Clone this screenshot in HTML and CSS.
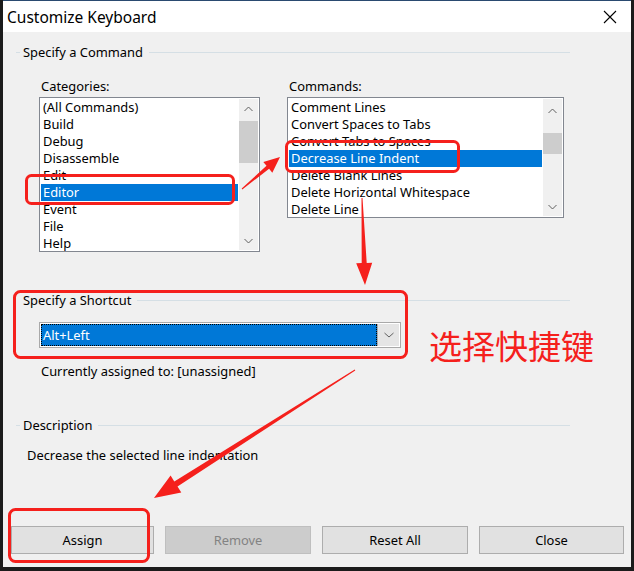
FILE: index.html
```html
<!doctype html>
<html>
    <head>
        <meta charset="utf-8" />
        <title>Customize Keyboard</title>
        <link rel="stylesheet" href="styles.css">
    </head>
    <body>
        <div id="window">
            <div class="titlebar">
                <span class="title">Customize Keyboard</span>
                <svg class="close" width="14" height="14" viewBox="0 0 14 14">
                    <path d="M1 1 L13 13 M13 1 L1 13" stroke="#000" stroke-width="1.1" fill="none" />
                </svg>
            </div>

            <div class="content">
                <div class="group-head"><span class="tick"></span><span>Specify a Command</span><span class="rule"></span></div>

                <div class="pickers">
                    <div class="col col-cat">
                        <label>Categories:</label>
                        <div class="listbox cat">
                            <ul>
                                <li>(All Commands)</li>
                                <li>Build</li>
                                <li>Debug</li>
                                <li>Disassemble</li>
                                <li>Edit</li>
                                <li class="sel">Editor</li>
                                <li>Event</li>
                                <li>File</li>
                                <li>Help</li>
                            </ul>
                            <div class="scroll">
                                <svg class="arrow" width="19" height="22" viewBox="0 0 19 22"><path d="M5.5 12 L9.5 8 L13.5 12" stroke="#606060" stroke-width="1" fill="none" /></svg>
                                <div class="thumb"></div>
                                <div class="track"></div>
                                <svg class="arrow" width="19" height="19" viewBox="0 0 19 19"><path d="M5.5 8 L9.5 12 L13.5 8" stroke="#606060" stroke-width="1" fill="none" /></svg>
                            </div>
                        </div>
                    </div>

                    <div class="col col-cmd">
                        <label>Commands:</label>
                        <div class="listbox cmd">
                            <ul>
                                <li>Comment Lines</li>
                                <li>Convert Spaces to Tabs</li>
                                <li>Convert Tabs to Spaces</li>
                                <li class="sel">Decrease Line Indent</li>
                                <li>Delete Blank Lines</li>
                                <li>Delete Horizontal Whitespace</li>
                                <li>Delete Line</li>
                            </ul>
                            <div class="scroll">
                                <svg class="arrow" width="19" height="34" viewBox="0 0 19 34"><path d="M5.5 14 L9.5 10 L13.5 14" stroke="#606060" stroke-width="1" fill="none" /></svg>
                                <div class="thumb"></div>
                                <div class="track"></div>
                                <svg class="arrow" width="19" height="19" viewBox="0 0 19 19"><path d="M5.5 8 L9.5 12 L13.5 8" stroke="#606060" stroke-width="1" fill="none" /></svg>
                            </div>
                        </div>
                    </div>
                </div>

                <div class="group-head shortcut-head"><span class="tick hidden"></span><span>Specify a Shortcut</span><span class="rule"></span></div>

                <div class="combo">
                    <div class="combo-value"><span>Alt+Left</span></div>
                    <div class="combo-btn">
                        <svg width="12" height="8" viewBox="0 0 12 8"><path d="M1.5 2 L6 6 L10.5 2" stroke="#606060" stroke-width="1" fill="none" /></svg>
                    </div>
                </div>

                <p class="assigned">Currently assigned to: [unassigned]</p>

                <div class="group-head desc-head"><span class="tick"></span><span>Description</span><span class="rule"></span></div>

                <p class="desc">Decrease the selected line indentation</p>
            </div>

            <div class="buttons">
                <button class="btn assign">Assign</button>
                <button class="btn remove" disabled>Remove</button>
                <button class="btn reset">Reset All</button>
                <button class="btn close-btn">Close</button>
            </div>
        </div>

        <!-- red markup drawn over the screenshot -->
        <svg class="marks" width="634" height="571" viewBox="0 0 634 571">
            <g fill="none" stroke="#f5201c" stroke-width="3">
                <rect x="26.5" y="175.5" width="207" height="28" rx="5" />
                <rect x="286.5" y="141.5" width="172" height="30" rx="5" />
                <rect x="14.5" y="291.5" width="392" height="66" rx="6" />
                <rect x="9.5" y="509.5" width="139" height="52" rx="6" />
            </g>
            <g fill="#f5201c">
                <polygon points="242.3,189.4 269.1,168.8 272.3,172.7 280,157 263.3,161.9 266.5,165.8 241.7,188.6" />
                <polygon points="361.5,198 361.7,263.1 356.2,263.3 365,285 372.2,262.7 366.7,262.9 362.5,198" />
                <polygon points="354.7,369.6 174.3,481.5 170.6,475.6 154,498 181.3,492.5 177.5,486.6 355.3,370.4" />
            </g>
        </svg>
        <div class="note">选择快捷键</div>
    </body>
</html>
```

FILE: styles.css
```css
* {
    margin: 0;
    padding: 0;
    box-sizing: border-box;
}

html, body {
    width: 634px;
    height: 571px;
    overflow: hidden;
}

body {
    background: #1b1b1b;
    font-family: "Noto Sans", "Liberation Sans", sans-serif;
    font-size: 12.9px;
    color: #000;
    position: relative;
}

#window {
    width: 628px;
    height: 567px;
    margin-left: 3px;
    border-top: 1px solid #2a4a70;
    background: #f0f0f0;
    display: flex;
    flex-direction: column;
}

.titlebar {
    height: 31px;
    background: #fff;
    display: flex;
    align-items: center;
    justify-content: space-between;
    padding: 0 14px 0 4px;
}

.title {
    font-size: 15.5px;
}

.close {
    margin-top: 1px;
}

.content {
    padding: 10px 61px 0 13px;
    flex: 1;
}

.group-head {
    display: flex;
    align-items: center;
    height: 20px;
}

.group-head .tick {
    width: 4px;
    height: 1px;
    background: #d5dfe5;
    margin-right: 3px;
}

.group-head .tick.hidden {
    background: transparent;
}

.group-head .rule {
    flex: 1;
    height: 1px;
    background: #d5dfe5;
    margin-left: 6px;
}

.pickers {
    display: flex;
    gap: 27px;
    padding-left: 23px;
    margin-top: 16px;
}

.col label {
    display: block;
    height: 17px;
    line-height: 17px;
    padding-left: 2px;
    margin-bottom: 2px;
}

.listbox {
    border: 1px solid #828790;
    background: #fff;
    display: flex;
    padding: 0 1px;
}

.listbox.cat {
    width: 221px;
    height: 155px;
}

.listbox.cmd {
    width: 277px;
    height: 121px;
}

.listbox ul {
    list-style: none;
    flex: 1;
    overflow: hidden;
    padding-top: 1px;
}

.listbox li {
    height: 17px;
    line-height: 17px;
    padding-left: 2px;
    white-space: nowrap;
}

.listbox li.sel {
    background: #0078d7;
    color: #fff;
}

.scroll {
    width: 19px;
    margin: 1px 0 1px 1px;
    background: #f0f0f0;
    display: flex;
    flex-direction: column;
}

.scroll .arrow {
    display: block;
    flex: none;
}

.scroll .track {
    flex: 1;
}

.cat .thumb {
    height: 42px;
    background: #cdcdcd;
}

.cmd .thumb {
    height: 21px;
    background: #cdcdcd;
}

.shortcut-head {
    margin-top: 38px;
}

.combo {
    margin: 12px 0 0 23px;
    width: 362px;
    height: 26px;
    border: 1px solid #a9a9a9;
    background: #fff;
    display: flex;
    padding: 1px;
}

.combo-value {
    flex: 1;
    background: #0078d7;
    color: #fff;
    border: 1px dotted #000;
    display: flex;
    align-items: center;
    padding-left: 1px;
}

.combo-btn {
    width: 22px;
    background: #e5e5e5;
    border-left: 1px solid #acacac;
    display: flex;
    align-items: center;
    justify-content: center;
}

.assigned {
    margin: 15px 0 0 25px;
    height: 17px;
    line-height: 17px;
}

.desc-head {
    margin-top: 35px;
}

.desc {
    margin: 12px 0 0 11px;
    height: 17px;
    line-height: 17px;
}

.buttons {
    display: flex;
    gap: 11px;
    padding: 0 0 13px 8px;
}

.btn {
    height: 28px;
    width: 146px;
    border: 1px solid #adadad;
    background: #e1e1e1;
    font-family: inherit;
    font-size: 12.9px;
    color: #000;
}

.btn.assign {
    width: 143px;
}

.btn.close-btn {
    width: 145px;
}

.btn.remove {
    background: #cccccc;
    border-color: #bfbfbf;
    color: #838383;
}

.marks {
    position: absolute;
    top: 0;
    left: 0;
    pointer-events: none;
}

.note {
    position: absolute;
    left: 429px;
    top: 325px;
    font-family: "Noto Sans CJK SC", sans-serif;
    font-size: 33px;
    line-height: 40px;
    color: #f5201c;
}
```
